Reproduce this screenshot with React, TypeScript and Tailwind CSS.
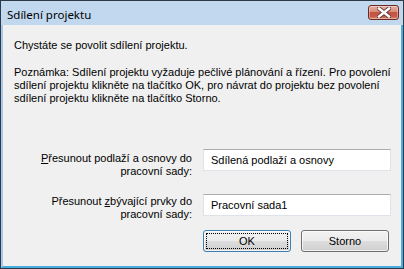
import React from "react";

const font = { fontFamily: '"Liberation Sans", Arial, sans-serif' };

function CloseButton() {
  return (
    <div className="w-[31px] h-[15px] rounded-[3px] border border-[#6b2a22] bg-[linear-gradient(to_bottom,#e8b0a4_0%,#d88a7a_45%,#c45442_50%,#c85a47_80%,#dc8c78_100%)] flex items-center justify-center shadow-[inset_0_0_0_1px_rgba(255,255,255,0.35)]">
      <svg width="14" height="11" viewBox="0 0 14 11">
        <path d="M2 1.5 L12 9.5 M12 1.5 L2 9.5" stroke="#5a3a36" strokeWidth="4.2" strokeLinecap="square" />
        <path d="M2 1.5 L12 9.5 M12 1.5 L2 9.5" stroke="#ffffff" strokeWidth="2.4" strokeLinecap="square" />
      </svg>
    </div>
  );
}

function Btn({ children, focused }: { children: React.ReactNode; focused?: boolean }) {
  return (
    <div
      className={
        "h-[22px] rounded-[3px] border flex items-center justify-center p-[2px] bg-[linear-gradient(to_bottom,#f2f2f2_0%,#ebebeb_48%,#dddddd_52%,#cfcfcf_100%)] shadow-[inset_0_0_0_1px_rgba(255,255,255,0.7)] " +
        (focused ? "border-[#3c7fb1]" : "border-[#707070]")
      }
    >
      <div
        className={
          "w-full h-full flex items-center justify-center text-[11px] text-black " +
          (focused ? "border border-dotted border-black" : "")
        }
      >
        {children}
      </div>
    </div>
  );
}

function Field({ value }: { value: string }) {
  return (
    <div className="w-[188px] h-[22px] bg-white border border-[#dfe3e9] border-t-[#abadb3] flex items-center pl-[7px] text-[11px] text-black">
      {value}
    </div>
  );
}

export default function App() {
  return (
    <div
      className="w-[404px] h-[269px] border border-[#2e3a48] bg-[linear-gradient(to_bottom,#c2d8ef_0%,#bed4ec_100%)] flex flex-col text-black"
      style={font}
    >
      <div className="h-[24px] flex items-start justify-between pl-[6px] pr-[4px]">
        <div className="mt-[6px] text-[11.5px] leading-[15px] text-black" style={{ fontFamily: '"Noto Sans", "Open Sans", sans-serif' }}>
          Sdílení projektu
        </div>
        <div className="mt-[4px]">
          <CloseButton />
        </div>
      </div>
      <div className="flex-1 flex border-l-2 border-r-2 border-b-2 border-l-[#a9c9e9] border-r-[#49ade0] border-b-[#49ade0]">
        <div className="flex-1 bg-[#f0f0f0] flex flex-col pl-[11px] pr-[10px] pt-[14px] text-[11px] leading-[13px]">
          <p>Chystáte se povolit sdílení projektu.</p>
          <p className="mt-[14px]">
            Poznámka: Sdílení projektu vyžaduje pečlivé plánování a řízení. Pro povolení sdílení projektu klikněte na tlačítko OK, pro návrat do projektu bez povolení sdílení projektu klikněte na tlačítko Storno.
          </p>
          <div className="mt-[44px] flex items-start justify-end gap-[11px]">
            <div className="mt-[3px] text-right">
              <span className="underline">P</span>řesunout podlaží a osnovy do
              <br />
              pracovní sady:
            </div>
            <Field value="Sdílená podlaží a osnovy" />
          </div>
          <div className="mt-[16px] flex items-start justify-end gap-[11px]">
            <div className="mt-[1px] text-right">
              Přesunout <span className="underline">z</span>bývající prvky do
              <br />
              pracovní sady:
            </div>
            <Field value="Pracovní sada1" />
          </div>
          <div className="mt-[9px] flex justify-end gap-[10px] pr-[2px]">
            <div className="w-[88px]">
              <Btn focused>OK</Btn>
            </div>
            <div className="w-[88px]">
              <Btn>Storno</Btn>
            </div>
          </div>
        </div>
      </div>
    </div>
  );
}
